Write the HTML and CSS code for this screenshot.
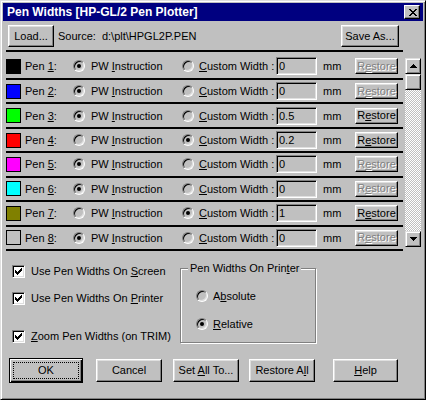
FILE: index.html
```html
<!DOCTYPE html>
<html>
<head>
<meta charset="utf-8">
<title>Pen Widths</title>
<link rel="stylesheet" href="styles.css">
</head>
<body>
<div class="window">
  <div class="titlebar">
    <span class="title">Pen Widths [HP-GL/2 Pen Plotter]</span>
    <button class="close" type="button">
      <svg width="8" height="7" viewBox="0 0 8 7" shape-rendering="crispEdges">
        <rect x="0" y="0" width="2" height="1"/><rect x="6" y="0" width="2" height="1"/>
        <rect x="1" y="1" width="2" height="1"/><rect x="5" y="1" width="2" height="1"/>
        <rect x="2" y="2" width="4" height="1"/>
        <rect x="3" y="3" width="2" height="1"/>
        <rect x="2" y="4" width="4" height="1"/>
        <rect x="1" y="5" width="2" height="1"/><rect x="5" y="5" width="2" height="1"/>
        <rect x="0" y="6" width="2" height="1"/><rect x="6" y="6" width="2" height="1"/>
      </svg>
    </button>
  </div>

  <div class="header">
    <button class="btn btn-load" type="button"><span>Load...</span></button>
    <span class="source">Source:</span>
    <span class="path">d:\plt\HPGL2P.PEN</span>
    <button class="btn btn-save" type="button"><span>Save As...</span></button>
  </div>

  <div class="listarea">
    <div class="list">
      <div class="row first">
        <span class="swatch" style="background:#000000"></span>
        <span class="pen">Pen <u>1</u>:</span>
        <span class="radio checked"></span><span>PW <u>I</u>nstruction</span>
        <span class="radio"></span><span><u>C</u>ustom Width :</span>
        <span class="field">0</span>
        <span class="mm">mm</span>
        <button class="restore disabled" type="button"><span>R<u>e</u>store</span></button>
      </div>
      <div class="row">
        <span class="swatch" style="background:#0000ff"></span>
        <span class="pen">Pen <u>2</u>:</span>
        <span class="radio checked"></span><span>PW <u>I</u>nstruction</span>
        <span class="radio"></span><span><u>C</u>ustom Width :</span>
        <span class="field">0</span>
        <span class="mm">mm</span>
        <button class="restore disabled" type="button"><span>R<u>e</u>store</span></button>
      </div>
      <div class="row">
        <span class="swatch" style="background:#00ff00"></span>
        <span class="pen">Pen <u>3</u>:</span>
        <span class="radio checked"></span><span>PW <u>I</u>nstruction</span>
        <span class="radio"></span><span><u>C</u>ustom Width :</span>
        <span class="field">0.5</span>
        <span class="mm">mm</span>
        <button class="restore" type="button"><span>R<u>e</u>store</span></button>
      </div>
      <div class="row">
        <span class="swatch" style="background:#ff0000"></span>
        <span class="pen">Pen <u>4</u>:</span>
        <span class="radio"></span><span>PW <u>I</u>nstruction</span>
        <span class="radio checked"></span><span><u>C</u>ustom Width :</span>
        <span class="field">0.2</span>
        <span class="mm">mm</span>
        <button class="restore" type="button"><span>R<u>e</u>store</span></button>
      </div>
      <div class="row">
        <span class="swatch" style="background:#ff00ff"></span>
        <span class="pen">Pen <u>5</u>:</span>
        <span class="radio checked"></span><span>PW <u>I</u>nstruction</span>
        <span class="radio"></span><span><u>C</u>ustom Width :</span>
        <span class="field">0</span>
        <span class="mm">mm</span>
        <button class="restore disabled" type="button"><span>R<u>e</u>store</span></button>
      </div>
      <div class="row">
        <span class="swatch" style="background:#00ffff"></span>
        <span class="pen">Pen <u>6</u>:</span>
        <span class="radio checked"></span><span>PW <u>I</u>nstruction</span>
        <span class="radio"></span><span><u>C</u>ustom Width :</span>
        <span class="field">0</span>
        <span class="mm">mm</span>
        <button class="restore disabled" type="button"><span>R<u>e</u>store</span></button>
      </div>
      <div class="row">
        <span class="swatch" style="background:#808000"></span>
        <span class="pen">Pen <u>7</u>:</span>
        <span class="radio"></span><span>PW <u>I</u>nstruction</span>
        <span class="radio checked"></span><span><u>C</u>ustom Width :</span>
        <span class="field">1</span>
        <span class="mm">mm</span>
        <button class="restore" type="button"><span>R<u>e</u>store</span></button>
      </div>
      <div class="row last">
        <span class="swatch" style="background:#c0c0c0"></span>
        <span class="pen">Pen <u>8</u>:</span>
        <span class="radio checked"></span><span>PW <u>I</u>nstruction</span>
        <span class="radio"></span><span><u>C</u>ustom Width :</span>
        <span class="field">0</span>
        <span class="mm">mm</span>
        <button class="restore disabled" type="button"><span>R<u>e</u>store</span></button>
      </div>
    </div>

    <div class="scrollbar">
      <div class="sb-btn">
        <svg width="7" height="4" viewBox="0 0 7 4" shape-rendering="crispEdges">
          <rect x="3" y="0" width="1" height="1"/><rect x="2" y="1" width="3" height="1"/>
          <rect x="1" y="2" width="5" height="1"/><rect x="0" y="3" width="7" height="1"/>
        </svg>
      </div>
      <div class="sb-thumb"></div>
      <div class="sb-track"></div>
      <div class="sb-btn">
        <svg width="7" height="4" viewBox="0 0 7 4" shape-rendering="crispEdges">
          <rect x="0" y="0" width="7" height="1"/><rect x="1" y="1" width="5" height="1"/>
          <rect x="2" y="2" width="3" height="1"/><rect x="3" y="3" width="1" height="1"/>
        </svg>
      </div>
    </div>
  </div>

  <div class="options">
    <div class="checks">
      <div class="check">
        <span class="cbox"><svg width="7" height="7" viewBox="0 0 7 7" shape-rendering="crispEdges"><rect x="6" y="0" width="1" height="1"/><rect x="5" y="1" width="2" height="1"/><rect x="0" y="2" width="1" height="1"/><rect x="4" y="2" width="3" height="1"/><rect x="0" y="3" width="2" height="1"/><rect x="3" y="3" width="3" height="1"/><rect x="0" y="4" width="5" height="1"/><rect x="1" y="5" width="3" height="1"/><rect x="2" y="6" width="1" height="1"/></svg></span>
        <span class="clabel">Use Pen Widths On <u>S</u>creen</span>
      </div>
      <div class="check">
        <span class="cbox"><svg width="7" height="7" viewBox="0 0 7 7" shape-rendering="crispEdges"><rect x="6" y="0" width="1" height="1"/><rect x="5" y="1" width="2" height="1"/><rect x="0" y="2" width="1" height="1"/><rect x="4" y="2" width="3" height="1"/><rect x="0" y="3" width="2" height="1"/><rect x="3" y="3" width="3" height="1"/><rect x="0" y="4" width="5" height="1"/><rect x="1" y="5" width="3" height="1"/><rect x="2" y="6" width="1" height="1"/></svg></span>
        <span class="clabel">Use Pen Widths On <u>P</u>rinter</span>
      </div>
      <div class="check spaced">
        <span class="cbox"><svg width="7" height="7" viewBox="0 0 7 7" shape-rendering="crispEdges"><rect x="6" y="0" width="1" height="1"/><rect x="5" y="1" width="2" height="1"/><rect x="0" y="2" width="1" height="1"/><rect x="4" y="2" width="3" height="1"/><rect x="0" y="3" width="2" height="1"/><rect x="3" y="3" width="3" height="1"/><rect x="0" y="4" width="5" height="1"/><rect x="1" y="5" width="3" height="1"/><rect x="2" y="6" width="1" height="1"/></svg></span>
        <span class="clabel"><u>Z</u>oom Pen Widths (on TRIM)</span>
      </div>
    </div>

    <div class="group">
      <span class="legend">Pen Widths On Prin<u>t</u>er</span>
      <div class="opt">
        <span class="radio"></span><span class="olabel">A<u>b</u>solute</span>
      </div>
      <div class="opt">
        <span class="radio checked"></span><span class="olabel"><u>R</u>elative</span>
      </div>
    </div>
  </div>

  <div class="buttons">
    <button class="btn btn-ok" type="button"><span>OK</span></button>
    <button class="btn btn-cancel" type="button"><span>Cancel</span></button>
    <button class="btn btn-setall" type="button"><span>Set <u>A</u>ll To...</span></button>
    <button class="btn btn-restoreall" type="button"><span>Restore A<u>l</u>l</span></button>
    <button class="btn btn-help" type="button"><span><u>H</u>elp</span></button>
  </div>
</div>
</body>
</html>
```

FILE: styles.css
```css
* {
  box-sizing: border-box;
}

html,
body {
  margin: 0;
  padding: 0;
  background: #c0c0c0;
}

body {
  font-family: "Liberation Sans", Arial, sans-serif;
  font-size: 11px;
  color: #000;
}

u {
  text-decoration: underline;
  text-underline-offset: 1px;
}

.window {
  width: 426px;
  height: 400px;
  background: #c0c0c0;
  border: 1px solid;
  border-color: #dfdfdf #000 #000 #dfdfdf;
  box-shadow: inset 1px 1px #fff, inset -1px -1px #808080;
  padding: 2px;
  display: flex;
  flex-direction: column;
}

/* title bar */
.titlebar {
  height: 18px;
  background: #000080;
  color: #fff;
  display: flex;
  align-items: center;
  padding: 0 3px 0 4px;
}

.title {
  font-weight: bold;
  font-size: 12px;
}

.close {
  margin-left: auto;
  width: 16px;
  height: 14px;
  padding: 0 0 0 1px;
  background: #c0c0c0;
  border: 1px solid;
  border-color: #fff #000 #000 #fff;
  box-shadow: inset -1px -1px #808080;
  display: flex;
  align-items: center;
  justify-content: center;
}

.close svg {
  fill: #000;
}

/* generic raised button */
.btn,
.restore {
  font-family: inherit;
  font-size: 11px;
  color: #000;
  background: #c0c0c0;
  border: 1px solid;
  border-color: #fff #000 #000 #fff;
  box-shadow: inset -1px -1px #808080, inset 1px 1px #dfdfdf;
  padding: 0;
  margin: 0;
  display: flex;
  align-items: center;
  justify-content: center;
  line-height: 1;
  white-space: nowrap;
}

/* header */
.header {
  display: flex;
  align-items: center;
  height: 22px;
  margin-top: 4px;
  padding-left: 5px;
}

.btn-load {
  width: 46px;
  height: 22px;
}

.source {
  margin-left: 4px;
}

.path {
  margin-left: 6px;
}

.btn-save {
  width: 58px;
  height: 22px;
  margin-left: auto;
  margin-right: 24px;
}

/* list */
.listarea {
  display: flex;
  align-items: flex-start;
  margin-top: 3px;
  padding-left: 3px;
}

.list {
  width: 397px;
}

.row {
  display: grid;
  grid-template-columns: 19px 48px 18px 91px 17px 77px 41px 38px 43px;
  align-items: center;
  height: 24.43px;
  border-top: 2px solid #000;
  white-space: nowrap;
}

.row.first {
  height: 28px;
  padding-top: 2px;
}

.row.last {
  height: 26.43px;
  border-bottom: 2px solid #000;
}

.swatch {
  width: 15px;
  height: 15px;
  border: 1px solid #000;
}

.radio {
  position: relative;
  width: 12px;
  height: 12px;
  border-radius: 50%;
  border: 1px solid;
  border-color: #808080 #fff #fff #808080;
  box-shadow: inset 1px 1px #000, inset -1px -1px #dfdfdf;
  background: #c0c0c0;
}

.radio.checked::after {
  content: "";
  position: absolute;
  left: 3px;
  top: 3px;
  width: 4px;
  height: 4px;
  border-radius: 50%;
  background: #000;
}

.field {
  width: 41px;
  height: 18px;
  background: #c0c0c0;
  border: 1px solid;
  border-color: #808080 #fff #fff #808080;
  box-shadow: inset 1px 1px #000, inset -1px -1px #dfdfdf;
  padding-left: 2px;
  display: flex;
  align-items: center;
}

.mm {
  padding-left: 6px;
}

.restore {
  width: 43px;
  height: 16px;
}

.restore.disabled {
  color: #808080;
  text-shadow: 1px 1px 0 #fff;
}

/* scrollbar */
.scrollbar {
  width: 16px;
  height: 189px;
  margin-left: 2px;
  margin-top: 8px;
  display: flex;
  flex-direction: column;
  background: repeating-conic-gradient(#fff 0 25%, #c0c0c0 0 50%) 0 0 / 2px 2px;
}

.sb-btn,
.sb-thumb {
  width: 16px;
  height: 16px;
  background: #c0c0c0;
  border: 1px solid;
  border-color: #dfdfdf #000 #000 #dfdfdf;
  box-shadow: inset 1px 1px #fff, inset -1px -1px #808080;
  display: flex;
  align-items: center;
  justify-content: center;
}

.sb-btn svg {
  fill: #000;
}

.sb-track {
  flex: 1;
}

/* options */
.options {
  display: flex;
  align-items: flex-start;
  padding-top: 14px;
}

.checks {
  width: 177px;
  padding-left: 9px;
}

.check {
  display: flex;
  align-items: center;
  height: 13px;
  white-space: nowrap;
}

.check + .check {
  margin-top: 14px;
}

.check.spaced {
  margin-top: 25px;
}

.cbox {
  width: 13px;
  height: 13px;
  background: #fff;
  border: 1px solid;
  border-color: #808080 #fff #fff #808080;
  box-shadow: inset 1px 1px #000, inset -1px -1px #dfdfdf;
  display: flex;
  align-items: center;
  justify-content: center;
}

.cbox svg {
  fill: #000;
}

.clabel {
  margin-left: 6px;
}

.group {
  position: relative;
  width: 136px;
  height: 75px;
  margin-top: 3px;
  border: 1px solid #808080;
  box-shadow: inset 1px 1px #fff, 1px 1px #fff;
  padding: 21px 0 0 15px;
}

.legend {
  position: absolute;
  top: -7px;
  left: 7px;
  padding: 0 2px;
  background: #c0c0c0;
  line-height: 13px;
  white-space: nowrap;
}

.opt {
  display: flex;
  align-items: center;
  height: 12px;
}

.opt + .opt {
  margin-top: 16px;
}

.olabel {
  margin-left: 5px;
}

/* bottom buttons */
.buttons {
  display: flex;
  align-items: center;
  margin-top: 15px;
  padding-left: 6px;
}

.btn-ok {
  position: relative;
  width: 74px;
  height: 25px;
  border: 1px solid #000;
  box-shadow: inset 1px 1px #fff, inset -1px -1px #000, inset -2px -2px #808080;
}

.btn-ok::after {
  content: "";
  position: absolute;
  left: 3px;
  top: 3px;
  right: 3px;
  bottom: 3px;
  border: 1px dotted #000;
}

.btn-cancel,
.btn-setall,
.btn-restoreall,
.btn-help {
  height: 23px;
}

.btn-cancel {
  width: 66px;
  margin-left: 13px;
}

.btn-setall {
  width: 66px;
  margin-left: 11px;
}

.btn-restoreall {
  width: 66px;
  margin-left: 10px;
}

.btn-help {
  width: 65px;
  margin-left: 18px;
}
```
